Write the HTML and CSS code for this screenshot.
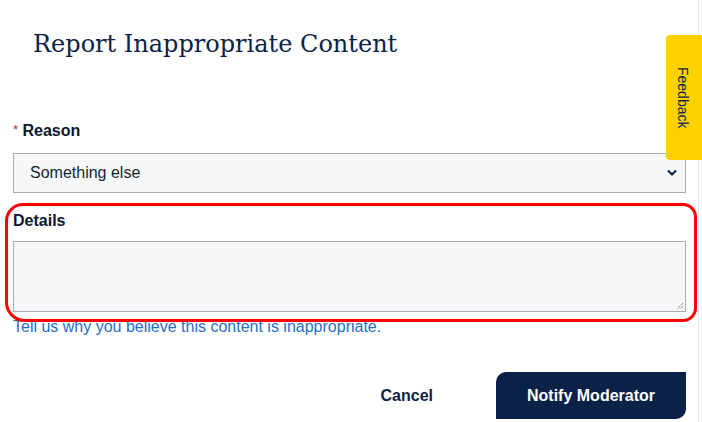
FILE: index.html
```html
<!DOCTYPE html>
<html lang="en">
<head>
<meta charset="utf-8">
<title>Report Inappropriate Content</title>
<link rel="stylesheet" href="styles.css">
</head>
<body>
<div class="page">
  <div class="modal">
    <h1 class="title">Report Inappropriate Content</h1>
    <div class="field reason-field">
      <label class="label"><span class="req">*</span> Reason</label>
      <div class="select">
        <span class="select-value">Something else</span>
        <svg class="chevron" width="10" height="8" viewBox="0 0 10 8"><path d="M1 1.5 L5 5.5 L9 1.5" fill="none" stroke="#0b2347" stroke-width="2.2"/></svg>
      </div>
    </div>
    <div class="field details-field">
      <label class="label">Details</label>
      <div class="textarea">
        <svg class="grip" width="9" height="9" viewBox="0 0 9 9"><path d="M8 2 L2 8 M8 5 L5 8" stroke="#555" stroke-width="1" stroke-dasharray="1 1"/></svg>
      </div>
      <div class="outline"></div>
    </div>
    <p class="help">Tell us why you believe this content is inappropriate.</p>
    <div class="actions">
      <button class="btn-cancel">Cancel</button>
      <button class="btn-primary">Notify Moderator</button>
    </div>
  </div>
  <div class="feedback"><span>Feedback</span></div>
</div>
</body>
</html>
```
FILE: styles.css
```css
* { box-sizing: border-box; }
html, body { margin: 0; padding: 0; background: #fff; }
body {
  font-family: "Liberation Sans", Arial, sans-serif;
  color: #0b2347;
  width: 702px;
  height: 422px;
  overflow: hidden;
}
.page {
  position: relative;
  width: 699px;
  height: 422px;
  border-right: 1px solid #e6e8eb;
}
.modal {
  padding: 0 12px 0 13px;
}
.title {
  margin: 0;
  padding: 29px 0 0 20px;
  font-family: "DejaVu Serif", serif;
  font-weight: normal;
  font-size: 24px;
  line-height: 30px;
  color: #0b2347;
}
.field { position: relative; }
.reason-field { margin-top: 62px; }
.label {
  display: block;
  font-weight: bold;
  font-size: 16px;
  line-height: 18px;
  color: #0b1730;
}
.req {
  color: #9b3a2a;
  font-weight: normal;
  font-size: 13px;
  vertical-align: 2px;
}
.select {
  margin-top: 13px;
  height: 40px;
  border: 1px solid #a7abb0;
  background: #f5f7f9;
  display: flex;
  align-items: center;
  justify-content: space-between;
  padding: 0 8px 0 16px;
}
.select-value {
  font-size: 16px;
  color: #1a1f2e;
}
.details-field { margin-top: 19px; }
.textarea {
  position: relative;
  margin-top: 11px;
  height: 71px;
  border: 1px solid #a7abb0;
  background: #f5f7f9;
}
.grip {
  position: absolute;
  right: 1px;
  bottom: 1px;
}
.outline {
  position: absolute;
  left: -8px;
  right: -11px;
  top: -9px;
  bottom: -10px;
  border: 3px solid #ff0000;
  border-radius: 18px 14px 14px 20px;
  pointer-events: none;
}
.help {
  margin: 6px 0 0 0;
  font-size: 16px;
  line-height: 18px;
  color: #1f6fc9;
}
.actions {
  margin-top: 36px;
  display: flex;
  justify-content: flex-end;
  align-items: center;
}
.btn-cancel {
  border: 0;
  background: none;
  font-family: "Liberation Sans", Arial, sans-serif;
  font-weight: bold;
  font-size: 16px;
  color: #0b2347;
  padding: 0;
  margin-right: 63px;
}
.btn-primary {
  width: 190px;
  height: 47px;
  border: 0;
  background: #0a2248;
  color: #fff;
  font-family: "Liberation Sans", Arial, sans-serif;
  font-weight: bold;
  font-size: 16px;
  border-radius: 10px 0 10px 0;
}
.feedback {
  position: absolute;
  left: 666px;
  top: 35px;
  width: 40px;
  height: 125px;
  background: #ffd100;
  border-radius: 4px 0 0 4px;
  display: flex;
  align-items: center;
  justify-content: center;
}
.feedback span {
  writing-mode: vertical-rl;
  font-size: 14px;
  color: #0b2347;
  margin-right: 6px;
}
```
